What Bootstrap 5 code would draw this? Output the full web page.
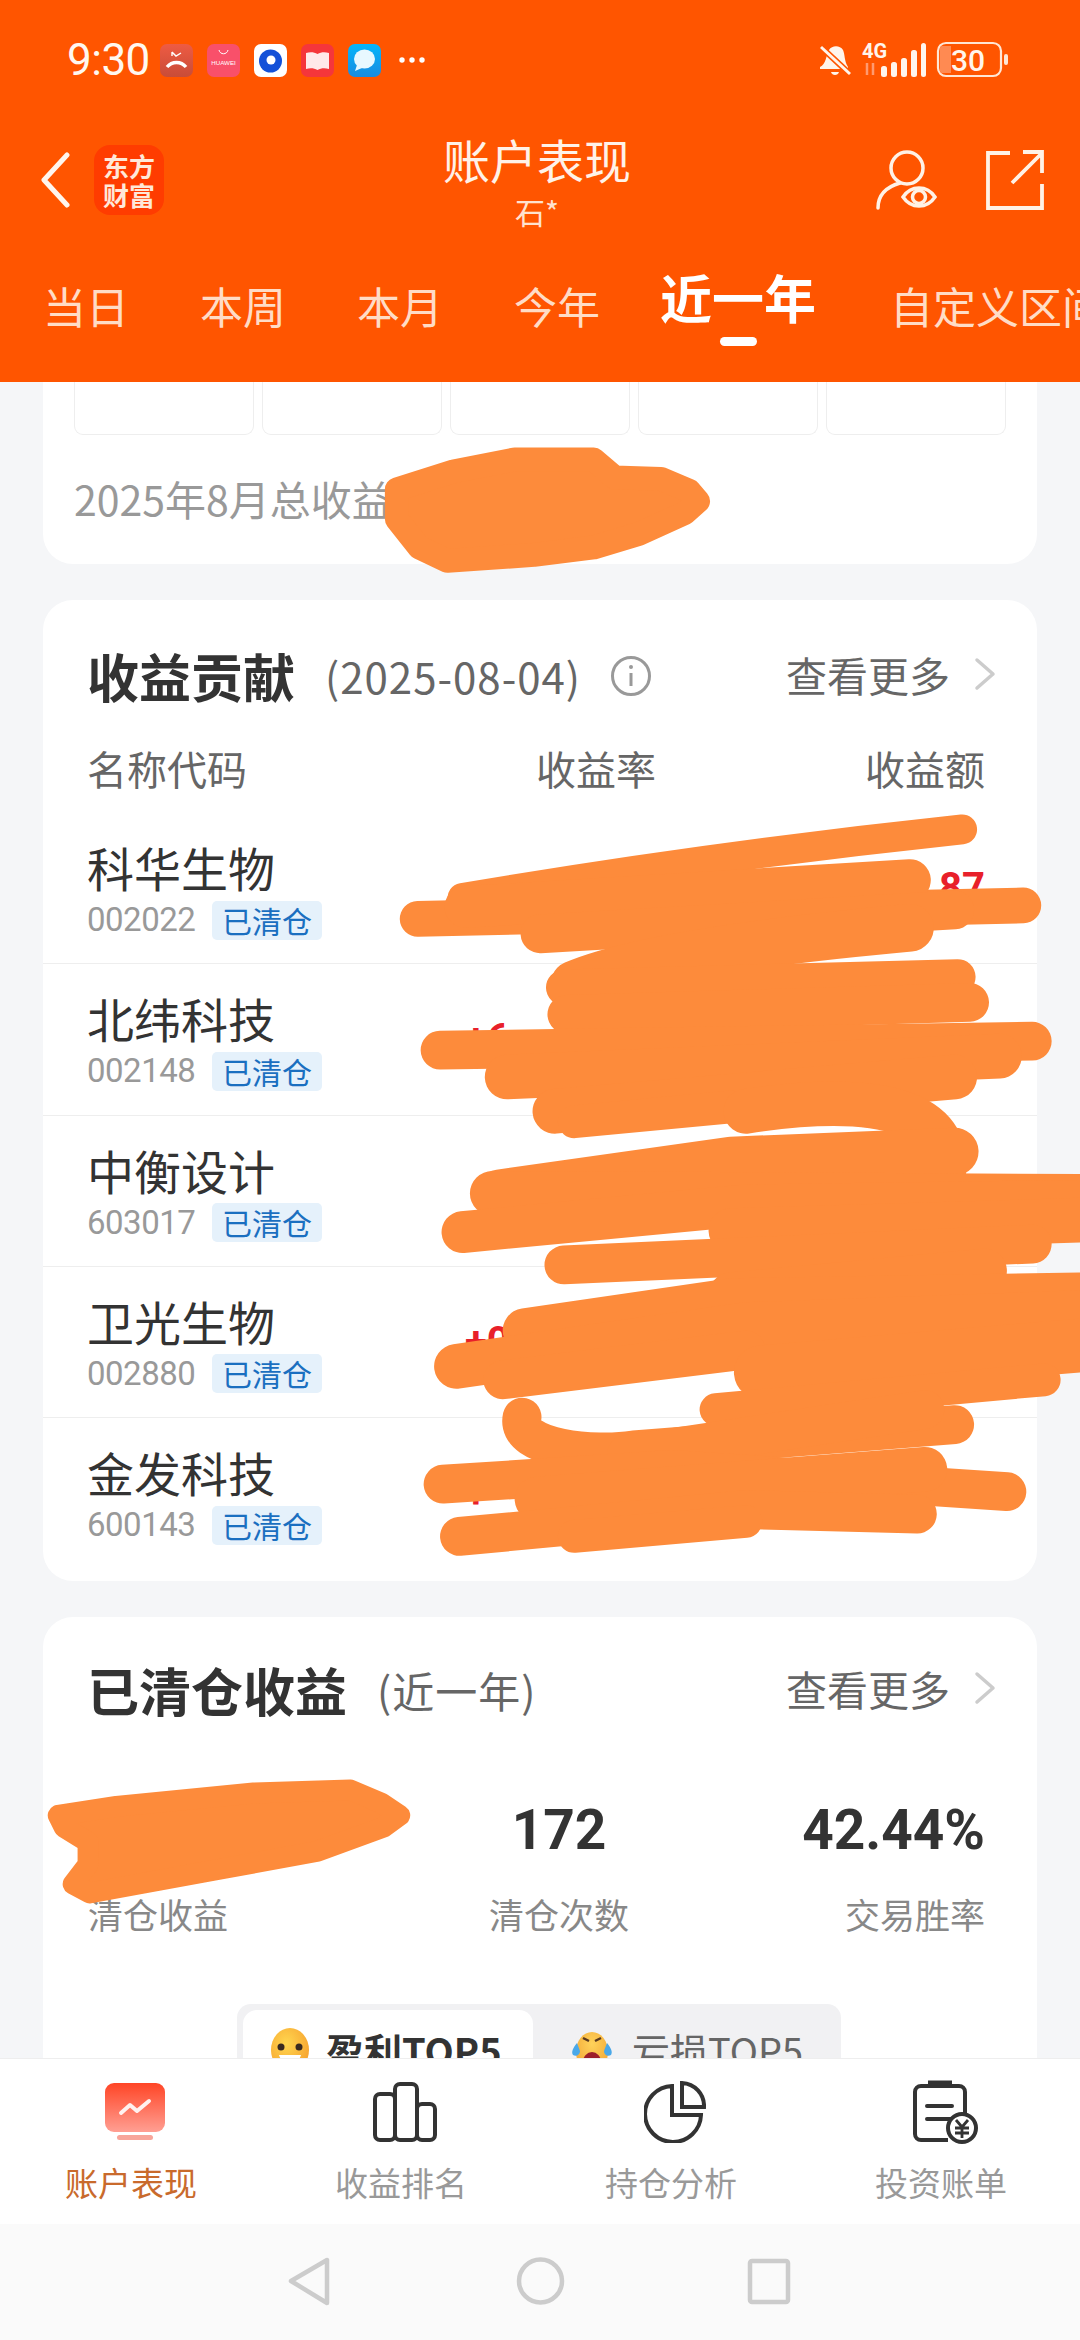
<!DOCTYPE html>
<html lang="zh-CN">
<head>
<meta charset="utf-8">
<title>账户表现</title>
<link href="https://cdn.jsdelivr.net/npm/bootstrap@5.3.0/dist/css/bootstrap.min.css" rel="stylesheet">
<style>
html,body{margin:0;padding:0;background:#f5f6f8}
body{font-family:"Noto Sans CJK SC","Noto Sans",sans-serif;color:#333}
.screen{width:1080px;height:2340px;overflow:hidden;background:#f5f6f8}
.hdr{height:382px;background:#ff5500;color:#fff;flex:none;overflow:hidden}
.stat{height:42px;margin-top:39px;padding:0 72px 0 67px}
.clock{font-family:Roboto,sans-serif;font-size:44px;line-height:42px;width:93px;color:#fff8f0;letter-spacing:-.5px}
.noti{gap:14px}
.more-dots{width:26px;margin-left:18px}
.navline{height:96px;margin-top:45px;padding:0 36px 0 40px}
.side-l{width:240px;padding-top:19px}
.side-r{width:250px;padding-top:24px}
.app-logo{width:70px;height:70px;background:#ff3c00;border-radius:16px;margin-left:24px;color:#ffe8d8;font-weight:700;font-size:26px;line-height:29px;text-align:center;padding-top:6px;flex:none}
.title-box{padding-top:3px}
.ttl{font-size:47px;line-height:60px;color:#fff2e8}
.sub{font-size:30px;line-height:36px;color:#ffe2cf;margin-top:4px}
.tabbar{height:132px;margin-top:28px;padding-left:43px;gap:71px;white-space:nowrap}
.tabitem{font-size:43px;line-height:60px;color:#ffdcc6;flex:none;margin-top:25px;width:86px}
.tabwide{width:auto}
.tabcur{font-size:52px;font-weight:700;color:#fff;margin-left:-11px;margin-right:3px;margin-top:11px;line-height:72px;width:156px}
.tabcur::after{content:"";display:block;width:37px;height:9px;border-radius:5px;background:#fff;margin:4px auto 0}
.body-area{flex:1 1 0;min-height:0;overflow:hidden;padding:0 43px;gap:36px}
.pane{background:#fff;flex:none}
.pane-top{height:182px;border-radius:0 0 30px 30px;padding:0 31px}
.minis{gap:8px}
.minibox{width:180px;height:53px;border:1.5px solid #eee;border-top:0;border-radius:0 0 9px 9px}
.sumline{font-size:41px;line-height:50px;color:#999;margin-top:38px}
.pane-list{height:981px;border-radius:30px}
.pane-last{height:600px;border-radius:30px 30px 0 0}
.headrow{padding:0 41px 0 44px;height:111px}
.headrow2{height:108px}
.moregrp{margin-bottom:7px}
.h-big{font-size:52px;font-weight:700;color:#333;line-height:70px}
.h-note{font-size:42px;color:#666;line-height:60px;margin-left:30px;letter-spacing:1px}
.inf-gap{margin-left:29px}
.morelink{font-size:41px;color:#666;line-height:60px}
.colhead{padding:0 52px 0 44px;height:75px;margin-top:27px;font-size:40px;line-height:60px;color:#666}
.col-rate{position:absolute;left:493px;top:0}
.stk{height:151.33px;padding:0 52px 0 44px;border-bottom:1.5px solid #eee}
.stk:last-child{border-bottom:0}
.who{width:378px;flex:none}
.nm{font-size:47px;line-height:56px;color:#333;margin-top:26px;white-space:nowrap}
.cdline{margin-top:5px}
.cd{font-size:33px;color:#999;line-height:40px;width:125px;font-family:Roboto,sans-serif;letter-spacing:-.5px}
.tagb{background:#e5f1fb;color:#1a6fc0;font-size:30px;line-height:39px;border-radius:5px;width:110px;text-align:center;white-space:nowrap}
.frag{font-size:40px;font-weight:700;color:#e8202a;font-family:Roboto,sans-serif;align-self:center}
.rate-cell{width:240px;flex:none}
.amt-cell{flex:1;text-align:right}
.stats3{padding:0 52px 0 45px;margin-top:73px}
.stat-a{width:401px;flex:none}
.stat-c{margin-left:auto}
.val{font-family:Roboto,sans-serif;font-weight:700;font-size:55px;line-height:64px;color:#333;height:64px}
.lab{font-size:35px;line-height:46px;color:#888;margin-top:29px}
.seg{width:604px;height:120px;background:#f1f1f3;border-radius:14px;margin:67px 0 0 194px;padding:6px 0 0 6px}
.seg-on{width:290px;height:110px;background:#fff;border-radius:14px;padding:16px 0 0 27px;font-weight:700;font-size:38px;color:#333;line-height:48px;gap:16px}
.seg-off{padding:16px 0 0 37px;font-size:38px;color:#666;line-height:48px;gap:18px}
.tabnav{height:166px;background:#fff;border-top:1.5px solid #eee;flex:none;padding-top:21px;position:relative;z-index:2}
.navcell{flex:0 0 270px;text-align:center}
.navico{height:64px;display:flex;align-items:center;justify-content:center}
.navtxt{font-size:33px;line-height:44px;color:#999;margin:16px 8px 0 0}
.navon{color:#c96a2c}
.sysnav{height:116px;background:#fafafa;flex:none;position:relative;z-index:2}
.smear{position:absolute;left:0;top:0;width:1080px;height:2340px;z-index:5;pointer-events:none}
.smear path,.smear polygon{fill:none;stroke:#fd8b3b;stroke-linecap:round;stroke-linejoin:round}
.smear polygon{fill:#fd8b3b}
</style>
</head>
<body>
<div class="screen d-flex flex-column position-relative">

  <header class="hdr">
    <div class="stat d-flex align-items-center justify-content-between">
      <div class="d-flex align-items-center">
        <div class="clock">9:30</div>
        <div class="noti d-flex align-items-center">
          <svg width="33" height="33" viewBox="0 0 33 33"><defs><linearGradient id="gp" x1="0" y1="0" x2="0" y2="1"><stop offset="0" stop-color="#ee5b43"/><stop offset="1" stop-color="#c84c38"/></linearGradient></defs><rect width="33" height="33" rx="7" fill="url(#gp)"/><path d="M7 23c5-6 14-6 19 0" fill="none" stroke="#fff" stroke-width="3.4"/><path d="M12 8l4 4 5-3M12 8v4" fill="none" stroke="#fff" stroke-width="1.4"/></svg>
          <svg width="33" height="33" viewBox="0 0 33 33"><rect width="33" height="33" rx="7" fill="#f9506a"/><path d="M12 6c1 5 8 5 9 0" fill="none" stroke="#fff" stroke-width="1"/><text x="16.5" y="21" text-anchor="middle" font-size="6.2" fill="#fff" font-family="Liberation Sans,sans-serif">HUAWEI</text></svg>
          <svg width="33" height="33" viewBox="0 0 33 33"><rect width="33" height="33" rx="7" fill="#fff"/><circle cx="16.5" cy="17" r="11.5" fill="#1350d8"/><circle cx="17" cy="16" r="4.5" fill="#fff"/></svg>
          <svg width="33" height="33" viewBox="0 0 33 33"><rect width="33" height="33" rx="7" fill="#f5363b"/><path d="M5 9c4-1 8-1 11.500 1 3.500-2 7.500-2 11.500-1v16c-4-1-8-1-11.500 1C13 24 9 24 5 25z" fill="#ffe9ea"/></svg>
          <svg width="33" height="33" viewBox="0 0 33 33"><defs><linearGradient id="gm" x1="0" y1="0" x2="0" y2="1"><stop offset="0" stop-color="#05b6fb"/><stop offset="1" stop-color="#1a8be0"/></linearGradient></defs><rect width="33" height="33" rx="7" fill="url(#gm)"/><ellipse cx="16.500" cy="15" rx="10.500" ry="9.500" fill="#e8f8ff"/><path d="M9 21l-2 6 7-3z" fill="#e8f8ff"/></svg>
        </div>
        <svg class="more-dots" height="6" viewBox="0 0 26 6"><circle cx="3" cy="3" r="2.700" fill="#fff"/><circle cx="13" cy="3" r="2.700" fill="#fff"/><circle cx="23" cy="3" r="2.700" fill="#fff"/></svg>
      </div>
      <svg width="190" height="60" viewBox="818 30 190 60">
        <path d="M829 50c3-5 11-5 14 0 2 4 1 11 5 17v2h-28v-2c6-3 6-11 9-17z" fill="#fff5ec"/><path d="M831 72h8c-1 4-7 4-8 0z" fill="#fff5ec"/><path d="M821 47l30 28" stroke="#ff5500" stroke-width="6"/><path d="M821 47l29 27" stroke="#fff5ec" stroke-width="3"/>
        <text x="862" y="58" font-family="Roboto,sans-serif" font-weight="700" font-size="20" fill="#fff5ec">4G</text>
        <path d="M867 63v12M873 63v12" stroke="#ff9a70" stroke-width="2.500"/>
        <rect x="881" y="66" width="6" height="11" rx="2.500" fill="#fff5ec"/><rect x="891" y="62" width="6" height="15" rx="2.500" fill="#fff5ec"/><rect x="901" y="58" width="6" height="19" rx="2.500" fill="#fff5ec"/><rect x="911" y="50" width="6" height="27" rx="2.500" fill="#fff5ec"/><rect x="921" y="43" width="5" height="34" rx="2.500" fill="#fff5ec"/>
        <rect x="938" y="43" width="63" height="33" rx="8" fill="none" stroke="#ffe6d4" stroke-width="2.200"/>
        <path d="M942 46h9v27h-9a2 2 0 0 1-2-2V48a2 2 0 0 1 2-2z" fill="#ff8a52"/>
        <text x="968" y="71" text-anchor="middle" font-family="Roboto,sans-serif" font-weight="500" font-size="30" fill="#fff5ec">30</text>
        <rect x="1004" y="54" width="4" height="11" rx="2" fill="#ffe6d4"/>
      </svg>
    </div>

    <div class="navline d-flex align-items-start justify-content-between">
      <div class="side-l d-flex align-items-center">
        <svg width="30" height="56" viewBox="0 0 30 56"><path d="M27 3L4 28l23 25" fill="none" stroke="#fff6ee" stroke-width="5" stroke-linecap="round" stroke-linejoin="round"/></svg>
        <div class="app-logo">东方<br>财富</div>
      </div>
      <div class="text-center title-box">
        <div class="ttl">账户表现</div>
        <div class="sub">石*</div>
      </div>
      <div class="side-r d-flex justify-content-end align-items-center gap-5">
        <svg width="62" height="60" viewBox="0 0 62 60" fill="none" stroke="#fff2e6" stroke-width="3.500" stroke-linecap="round"><circle cx="31" cy="18" r="16"/><path d="M2 58c0-13 8-21 22-25"/><path d="M27 47c8-12 24-12 32 0-8 12-24 12-32 0z"/><circle cx="43" cy="47" r="6.500"/></svg>
        <svg width="58" height="60" viewBox="0 0 58 60" fill="none" stroke="#fff2e6" stroke-width="3.800"><path d="M24 3H2v55h54V34"/><path d="M26 33L56 3M37 2h19v21"/></svg>
      </div>
    </div>

    <div class="tabbar d-flex align-items-start">
      <div class="tabitem">当日</div>
      <div class="tabitem">本周</div>
      <div class="tabitem">本月</div>
      <div class="tabitem">今年</div>
      <div class="tabitem tabcur">近一年</div>
      <div class="tabitem tabwide">自定义区间</div>
    </div>
  </header>

  <main class="body-area d-flex flex-column">
    <section class="pane pane-top">
      <div class="minis d-flex">
        <div class="minibox"></div><div class="minibox"></div><div class="minibox"></div><div class="minibox"></div><div class="minibox"></div>
      </div>
      <div class="sumline">2025年8月总收益</div>
    </section>

    <section class="pane pane-list">
      <div class="headrow d-flex align-items-end justify-content-between">
        <div class="d-flex align-items-center">
          <span class="h-big">收益贡献</span>
          <span class="h-note">(2025-08-04)</span>
          <svg width="42" height="42" viewBox="0 0 42 42" class="inf-gap" fill="none" stroke="#999" stroke-width="3"><circle cx="21" cy="21" r="18.500"/><path d="M21 18v13"/><circle cx="21" cy="12" r="1" fill="#999" stroke-width="2"/></svg>
        </div>
        <div class="moregrp d-flex align-items-center">
          <span class="morelink">查看更多</span>
          <svg width="22" height="34" viewBox="0 0 22 34" class="ms-4" fill="none" stroke="#ccc" stroke-width="3.500" stroke-linecap="round" stroke-linejoin="round"><path d="M3 3l16 14L3 31"/></svg>
        </div>
      </div>
      <div class="colhead d-flex justify-content-between position-relative">
        <span>名称代码</span><span class="col-rate">收益率</span><span>收益额</span>
      </div>
      <div>
        <div class="stk d-flex align-items-start">
          <div class="who"><div class="nm">科华生物</div><div class="cdline d-flex align-items-center"><span class="cd">002022</span><span class="tagb">已清仓</span></div></div>
          <div class="rate-cell"></div>
          <div class="amt-cell frag">87</div>
        </div>
        <div class="stk d-flex align-items-start">
          <div class="who"><div class="nm">北纬科技</div><div class="cdline d-flex align-items-center"><span class="cd">002148</span><span class="tagb">已清仓</span></div></div>
          <div class="frag rate-cell">+6</div>
        </div>
        <div class="stk d-flex align-items-start">
          <div class="who"><div class="nm">中衡设计</div><div class="cdline d-flex align-items-center"><span class="cd">603017</span><span class="tagb">已清仓</span></div></div>
        </div>
        <div class="stk d-flex align-items-start">
          <div class="who"><div class="nm">卫光生物</div><div class="cdline d-flex align-items-center"><span class="cd">002880</span><span class="tagb">已清仓</span></div></div>
          <div class="frag rate-cell">+0</div>
          <div class="amt-cell frag">%</div>
        </div>
        <div class="stk d-flex align-items-start">
          <div class="who"><div class="nm">金发科技</div><div class="cdline d-flex align-items-center"><span class="cd">600143</span><span class="tagb">已清仓</span></div></div>
          <div class="frag rate-cell">+</div>
          <div class="amt-cell frag">%</div>
        </div>
      </div>
    </section>

    <section class="pane pane-last">
      <div class="headrow headrow2 d-flex align-items-end justify-content-between">
        <div class="d-flex align-items-center">
          <span class="h-big">已清仓收益</span>
          <span class="h-note">(近一年)</span>
        </div>
        <div class="moregrp d-flex align-items-center">
          <span class="morelink">查看更多</span>
          <svg width="22" height="34" viewBox="0 0 22 34" class="ms-4" fill="none" stroke="#ccc" stroke-width="3.500" stroke-linecap="round" stroke-linejoin="round"><path d="M3 3l16 14L3 31"/></svg>
        </div>
      </div>
      <div class="stats3 d-flex">
        <div class="stat-a"><div class="val"></div><div class="lab">清仓收益</div></div>
        <div class="text-center"><div class="val">172</div><div class="lab">清仓次数</div></div>
        <div class="text-end stat-c"><div class="val">42.44%</div><div class="lab">交易胜率</div></div>
      </div>
      <div class="seg d-flex">
        <div class="seg-on d-flex align-items-start">
          <svg width="40" height="46" viewBox="0 0 40 46"><defs><radialGradient id="fa" cx=".4" cy=".35" r=".8"><stop offset="0" stop-color="#ffd64f"/><stop offset="1" stop-color="#f59a2a"/></radialGradient></defs><ellipse cx="20" cy="24" rx="19" ry="22" fill="url(#fa)"/><circle cx="11" cy="21" r="3.500" fill="#3a2a20"/><circle cx="29" cy="21" r="3.500" fill="#3a2a20"/><path d="M9 29h22c-2 10-20 10-22 0z" fill="#fff"/></svg>
          <span>盈利TOP5</span>
        </div>
        <div class="seg-off d-flex align-items-start">
          <svg width="44" height="46" viewBox="0 0 44 46"><defs><radialGradient id="fb" cx=".5" cy=".3" r=".8"><stop offset="0" stop-color="#ffd25a"/><stop offset="1" stop-color="#f0a030"/></radialGradient></defs><ellipse cx="22" cy="26" rx="16" ry="20" fill="url(#fb)"/><path d="M13 12l6 3M31 12l-6 3" stroke="#5a3a20" stroke-width="2.500" fill="none"/><ellipse cx="22" cy="36" rx="9" ry="10" fill="#9c1f2a"/><path d="M7 17c-4 5-6 9-4 12 3 2 7 0 7-4zM37 17c4 5 6 9 4 12-3 2-7 0-7-4z" fill="#4aa8e8"/></svg>
          <span>亏损TOP5</span>
        </div>
      </div>
    </section>
  </main>

  <nav class="tabnav d-flex">
    <div class="navcell">
      <div class="navico">
        <svg width="62" height="60" viewBox="0 0 62 60"><defs><linearGradient id="ga" x1="0" y1="0" x2="0" y2="1"><stop offset="0" stop-color="#ff4526"/><stop offset="1" stop-color="#ff9f93"/></linearGradient></defs><rect x="1" y="1" width="60" height="49" rx="9" fill="url(#ga)"/><path d="M17 31l9-8 7 6 12-10" fill="none" stroke="#fff" stroke-width="4" stroke-linecap="round" stroke-linejoin="round" opacity=".9"/><rect x="13" y="53" width="36" height="5" rx="2.500" fill="#f8a59a"/></svg>
      </div>
      <div class="navtxt navon">账户表现</div>
    </div>
    <div class="navcell">
      <div class="navico">
        <svg width="64" height="60" viewBox="0 0 64 60" fill="none" stroke="#333" stroke-width="4" stroke-linejoin="round"><rect x="2" y="12" width="20" height="46" rx="5"/><rect x="22" y="2" width="22" height="56" rx="5"/><rect x="44" y="22" width="18" height="36" rx="5"/></svg>
      </div>
      <div class="navtxt">收益排名</div>
    </div>
    <div class="navcell">
      <div class="navico">
        <svg width="62" height="62" viewBox="0 0 62 62" fill="none" stroke="#333" stroke-width="4"><path d="M28 5a28 28 0 1 0 29 29H28z"/><path d="M38 2a23 23 0 0 1 22 24H38z"/></svg>
      </div>
      <div class="navtxt">持仓分析</div>
    </div>
    <div class="navcell">
      <div class="navico">
        <svg width="66" height="64" viewBox="0 0 66 64" fill="none" stroke="#333" stroke-width="4"><path d="M9 6h38a6 6 0 0 1 6 6v32M36 60H9a6 6 0 0 1-6-6V12a6 6 0 0 1 6-6"/><path d="M16 3h24" stroke-width="5"/><path d="M15 26h25M15 39h32" stroke-linecap="round"/><circle cx="50" cy="48" r="14" fill="#fff"/><path d="M44 40l6 7 6-7M43 48h14M43 53h14M50 47v11" stroke-width="2.800"/></svg>
      </div>
      <div class="navtxt">投资账单</div>
    </div>
  </nav>

  <div class="sysnav">
    <svg width="1080" height="116" viewBox="0 0 1080 116" fill="none" stroke="#ccc" stroke-width="4.500" stroke-linejoin="round"><path d="M327 36v43L291 57z"/><circle cx="540.500" cy="57" r="21.500"/><rect x="750" y="37" width="38" height="41" rx="2"/></svg>
  </div>

  <svg class="smear" viewBox="0 0 724 1568.700">
    <polygon stroke-width="16" points="266,328 304,316 345,308 398,308 412,320 443,321 462,329 468,336 459,344 428,358 398,367 358,372 300,376 281,367 266,348"/>
    <path stroke-width="20" d="M645 556C560 565 440 580 310 602"/>
    <path stroke-width="24" d="M280 616L686 607"/>
    <path stroke-width="28" d="M312 608L610 590"/>
    <path stroke-width="26" d="M362 626L640 610"/>
    <path stroke-width="32" d="M385 660C420 645 500 632 610 622"/>
    <path stroke-width="24" d="M378 662L642 655"/>
    <path stroke-width="26" d="M380 680L650 672"/>
    <path stroke-width="26" d="M295 704L692 698"/>
    <path stroke-width="30" d="M340 722L670 708"/>
    <path stroke-width="30" d="M372 745L640 722"/>
    <path stroke-width="22" d="M385 752L490 742"/>
    <path stroke-width="30" d="M500 745C600 730 640 750 632 790"/>
    <path stroke-width="32" d="M335 800L490 778L640 772"/>
    <path stroke-width="30" d="M330 800L724 802"/>
    <path stroke-width="28" d="M310 826L500 808L724 805"/>
    <path stroke-width="30" d="M490 825L724 818"/>
    <path stroke-width="26" d="M378 848L692 834"/>
    <path stroke-width="30" d="M490 868L660 852"/>
    <path stroke-width="30" d="M352 892L490 872L724 868"/>
    <path stroke-width="30" d="M306 916L500 888L724 880"/>
    <path stroke-width="26" d="M337 925L500 905"/>
    <path stroke-width="36" d="M510 920L724 902"/>
    <path stroke-width="26" d="M350 950C345 972 400 976 425 972L640 955"/>
    <path stroke-width="22" d="M480 945L700 925"/>
    <path stroke-width="26" d="M420 975L620 945"/>
    <path stroke-width="26" d="M297 995L450 985L675 1000"/>
    <path stroke-width="30" d="M360 1005L620 985"/>
    <path stroke-width="26" d="M308 1030L500 1012L615 1015"/>
    <path stroke-width="22" d="M385 1030L500 1020"/>
    <polygon stroke-width="14" points="39,1217 78,1211 170,1202 235,1200 256,1209 268,1217 257,1225 213,1241 148,1253 60,1269 49,1263 59,1250 59,1235 43,1225"/>
  </svg>
</div>
<script src="https://cdn.jsdelivr.net/npm/bootstrap@5.3.0/dist/js/bootstrap.bundle.min.js"></script>
</body>
</html>
